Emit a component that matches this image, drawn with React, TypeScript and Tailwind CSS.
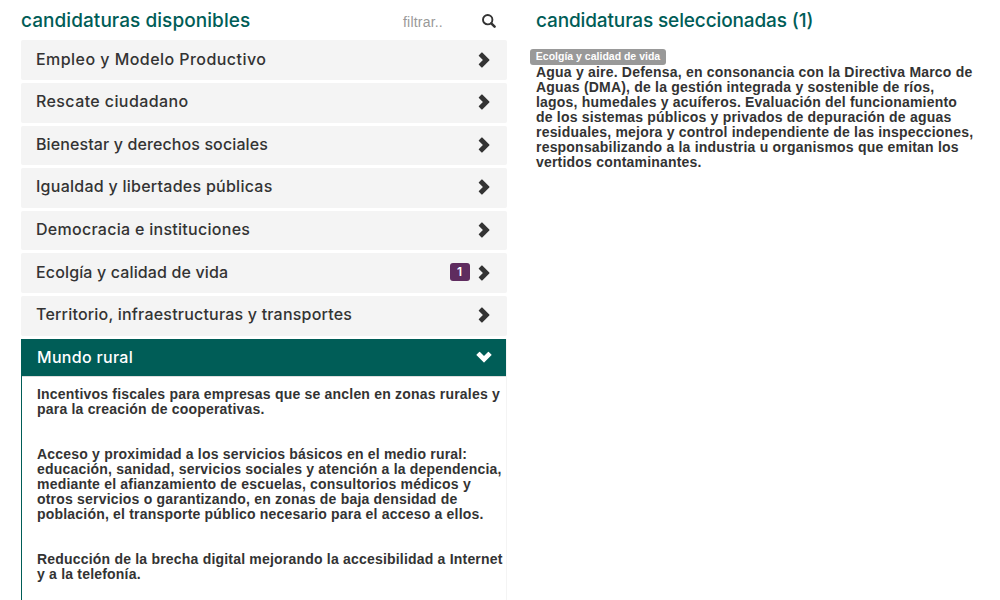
import React from "react";

const sections = [
  { title: "Empleo y Modelo Productivo", tracking: "tracking-[0.45px]" },
  { title: "Rescate ciudadano", tracking: "tracking-[0.4px]" },
  { title: "Bienestar y derechos sociales", tracking: "tracking-[0.11px]" },
  { title: "Igualdad y libertades públicas", tracking: "tracking-[0.26px]" },
  { title: "Democracia e instituciones", tracking: "tracking-[0.28px]" },
  { title: "Ecolgía y calidad de vida", tracking: "tracking-[0.14px]", count: 1 },
  { title: "Territorio, infraestructuras y transportes", tracking: "tracking-[0.2px]" },
];

const proposals = [
  ["Incentivos fiscales para empresas que se anclen en zonas rurales y", "para la creación de cooperativas."],
  [
    "Acceso y proximidad a los servicios básicos en el medio rural:",
    "educación, sanidad, servicios sociales y atención a la dependencia,",
    "mediante el afianzamiento de escuelas, consultorios médicos y",
    "otros servicios o garantizando, en zonas de baja densidad de",
    "población, el transporte público necesario para el acceso a ellos.",
  ],
  ["Reducción de la brecha digital mejorando la accesibilidad a Internet", "y a la telefonía."],
];

const selected = [
  "Agua y aire. Defensa, en consonancia con la Directiva Marco de",
  "Aguas (DMA), de la gestión integrada y sostenible de ríos,",
  "lagos, humedales y acuíferos. Evaluación del funcionamiento",
  "de los sistemas públicos y privados de depuración de aguas",
  "residuales, mejora y control independiente de las inspecciones,",
  "responsabilizando a la industria u organismos que emitan los",
  "vertidos contaminantes.",
];

function Chevron({ down = false }: { down?: boolean }) {
  return (
    <svg viewBox="0 0 16 16" className={down ? "h-4 w-4 rotate-90" : "mb-px h-4 w-4"} fill="currentColor">
      <path d="M2.900 3.200 5.500.6q.4-.4.8 0L13.300 7.600q.4.4 0 .8L6.300 15.400q-.4.4-.8 0L2.900 12.800q-.4-.4 0-.8L6.900 8 2.900 4q-.4-.4 0-.8z" />
    </svg>
  );
}

function Search() {
  return (
    <svg viewBox="0 0 14 14" className="mt-px h-3.5 w-3.5" fill="none" stroke="currentColor">
      <circle cx="5.700" cy="5.700" r="4.700" strokeWidth="1.900" />
      <path d="m9.300 9.300 3.300 3.300" strokeWidth="2.500" strokeLinecap="round" />
    </svg>
  );
}

function Lines({ lines }: { lines: string[] }) {
  return (
    <p className="text-sm leading-[15px] font-bold tracking-[0.2px] whitespace-nowrap">
      {lines.map((line) => (
        <span key={line} className="block">{line}</span>
      ))}
    </p>
  );
}

export default function App() {
  return (
    <main className="flex h-[600px] w-[1000px] overflow-hidden bg-white pl-[21px] font-['Liberation_Sans',Arial,sans-serif] text-[#333]">
      <section className="w-[485.500px] shrink-0">
        <header className="flex h-[40.400px] items-center">
          <h2 className="w-[382px] pt-0.5 font-[Inter,sans-serif] text-[19px] font-medium tracking-[0.06px] whitespace-nowrap text-[#005d57]">
            candidaturas disponibles
          </h2>
          <span className="w-[79px] pt-1 text-sm tracking-[0.2px] text-[#999]">filtrar..</span>
          <Search />
        </header>
        <div className="flex flex-col gap-[3px]">
          {sections.map((s) => (
            <div key={s.title} className="flex h-[39.600px] items-center rounded-[2px] bg-[#f4f4f4] pr-[15px] pl-[15px]">
              <h3 className={`flex-1 pb-[3px] font-[Inter,sans-serif] text-base font-medium whitespace-nowrap ${s.tracking}`}>{s.title}</h3>
              {s.count && (
                <span className="mr-1.5 mb-0.5 flex h-[18px] w-5 items-center justify-center rounded-[3px] bg-[#5f2c5f] font-[Inter,sans-serif] text-xs font-semibold text-white">
                  {s.count}
                </span>
              )}
              <Chevron />
            </div>
          ))}
          <div className="h-[270px] border-r border-l border-r-[#f4f4f4] border-l-[#005d57]">
            <div className="flex h-[37.600px] items-center bg-[#005d57] pr-[14px] pl-[15px] text-white">
              <h3 className="flex-1 font-[Inter,sans-serif] text-base font-medium tracking-[0.3px]">Mundo rural</h3>
              <Chevron down />
            </div>
            <div className="flex flex-col gap-[30px] border-t border-[#ddd] pt-[10px] pl-[15px]">
              {proposals.map((p) => (
                <Lines key={p[0]} lines={p} />
              ))}
            </div>
          </div>
        </div>
      </section>
      <section className="ml-[23.500px] w-[460px]">
        <h2 className="flex h-10 items-center pt-0.5 pl-1.5 font-[Inter,sans-serif] text-[19px] font-medium tracking-[-0.13px] whitespace-nowrap text-[#005d57]">
          candidaturas seleccionadas (1)
        </h2>
        <span className="mt-[9px] flex h-4 w-[136px] items-center justify-center rounded-[3px] bg-[#999] pb-px text-[10.500px] font-bold whitespace-nowrap text-white">
          Ecolgía y calidad de vida
        </span>
        <div className="pl-1.5">
          <Lines lines={selected} />
        </div>
      </section>
    </main>
  );
}
